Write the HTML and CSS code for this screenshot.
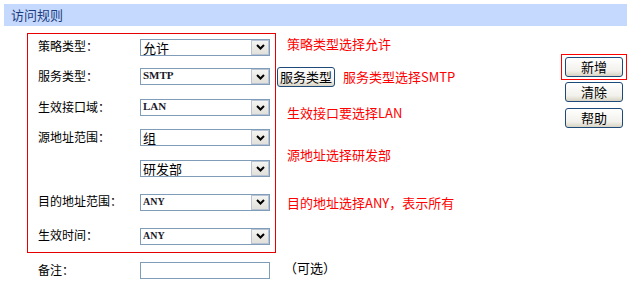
FILE: index.html
```html
<!DOCTYPE html>
<html lang="zh-CN">
<head>
  <meta charset="UTF-8">
  <title>访问规则</title>
  <link rel="stylesheet" href="styles.css">
</head>
<body>
  <div class="title-bar">访问规则</div>

  <div class="page">
    <div class="rule-form">
      <div class="box"></div>

      <div class="r1">
        <span class="lbl">策略类型：</span>
        <span class="sel"><span class="val">允许</span><span class="arrow"><svg width="9" height="6" viewBox="0 0 9 6"><path d="M1 1l3.5 3.5L8 1" fill="none" stroke="#000" stroke-width="2"/></svg></span></span>
        <span class="note note-up">策略类型选择允许</span>
      </div>

      <div class="r2">
        <span class="lbl">服务类型：</span>
        <span class="sel"><span class="val latin">SMTP</span><span class="arrow"><svg width="9" height="6" viewBox="0 0 9 6"><path d="M1 1l3.5 3.5L8 1" fill="none" stroke="#000" stroke-width="2"/></svg></span></span>
        <span class="note note-btn"><button class="xp-btn">服务类型</button><span>服务类型选择SMTP</span></span>
      </div>

      <div class="r3">
        <span class="lbl">生效接口域：</span>
        <span class="sel"><span class="val latin">LAN</span><span class="arrow"><svg width="9" height="6" viewBox="0 0 9 6"><path d="M1 1l3.5 3.5L8 1" fill="none" stroke="#000" stroke-width="2"/></svg></span></span>
        <span class="note note-down">生效接口要选择LAN</span>
      </div>

      <div class="r4">
        <span class="lbl">源地址范围：</span>
        <span class="sel"><span class="val">组</span><span class="arrow"><svg width="9" height="6" viewBox="0 0 9 6"><path d="M1 1l3.5 3.5L8 1" fill="none" stroke="#000" stroke-width="2"/></svg></span></span>
        <span class="note src-note">源地址选择研发部</span>
      </div>

      <div class="r5">
        <span class="sel"><span class="val">研发部</span><span class="arrow"><svg width="9" height="6" viewBox="0 0 9 6"><path d="M1 1l3.5 3.5L8 1" fill="none" stroke="#000" stroke-width="2"/></svg></span></span>
      </div>

      <div class="r6">
        <span class="lbl">目的地址范围：</span>
        <span class="sel"><span class="val latin small">ANY</span><span class="arrow"><svg width="9" height="6" viewBox="0 0 9 6"><path d="M1 1l3.5 3.5L8 1" fill="none" stroke="#000" stroke-width="2"/></svg></span></span>
        <span class="note">目的地址选择ANY，表示所有</span>
      </div>

      <div class="r7">
        <span class="lbl">生效时间：</span>
        <span class="sel"><span class="val latin small">ANY</span><span class="arrow"><svg width="9" height="6" viewBox="0 0 9 6"><path d="M1 1l3.5 3.5L8 1" fill="none" stroke="#000" stroke-width="2"/></svg></span></span>
      </div>

      <div class="r8">
        <span class="lbl">备注：</span>
        <input class="text-in" type="text">
        <span class="hint">（可选）</span>
      </div>
    </div>

    <div class="actions">
      <div class="marked"><button class="xp-btn">新增</button></div>
      <button class="xp-btn act">清除</button>
      <button class="xp-btn act">帮助</button>
    </div>
  </div>
</body>
</html>
```

FILE: styles.css
```css
body {
  margin: 4px;
  font-family: "Noto Sans CJK SC", "DejaVu Sans", sans-serif;
  font-size: 12px;
  color: #000;
  background: #fff;
}
.title-bar {
  height: 22px;
  line-height: 22px;
  padding-left: 7px;
  background: #c5d9ff;
  color: #1d3c7c;
  font-size: 13px;
}
.page {
  display: flex;
  margin-top: 7px;
}
.rule-form {
  display: grid;
  flex-shrink: 0;
  margin-left: 23px;
  grid-template-columns: 113px 130px 6px 285px;
  grid-template-rows: 28px 31px 31px 29px 33px 34px 34px 35px;
}
.rule-form > div:not(.box) {
  display: contents;
}
.box {
  grid-column: 1 / 4;
  grid-row: 1 / 8;
  border: 1px solid #e60000;
}
.r1 > * { grid-row: 1; }
.r2 > * { grid-row: 2; }
.r3 > * { grid-row: 3; }
.r4 > * { grid-row: 4; }
.r5 > * { grid-row: 5; }
.r6 > * { grid-row: 6; }
.r7 > * { grid-row: 7; }
.r8 > * { grid-row: 8; }
.r4 > .src-note { grid-row: 4 / 6; }

.lbl {
  grid-column: 1;
  align-self: center;
  padding-left: 11px;
  padding-bottom: 3px;
  white-space: nowrap;
}
.sel, .text-in {
  grid-column: 2;
  align-self: center;
  box-sizing: border-box;
  width: 130px;
  height: 17px;
  border: 1px solid #7f9db9;
  background: #fff;
}
.sel {
  display: flex;
  align-items: center;
  justify-content: space-between;
}
.val {
  padding-left: 2px;
  font-size: 13px;
  line-height: 15px;
}
.latin {
  font-family: "Liberation Serif", serif;
  font-weight: bold;
  font-size: 11px;
  color: #1a1a2a;
  padding-bottom: 2px;
}
.small {
  font-size: 10px;
}
.arrow {
  display: flex;
  align-items: center;
  justify-content: center;
  width: 18px;
  height: 15px;
  box-sizing: border-box;
  border: 1px solid #b8c4d6;
  background: linear-gradient(#f4f4f2, #e2e0da);
}
.text-in {
  margin: 0;
  padding: 0;
  font: inherit;
}
.note {
  grid-column: 4;
  align-self: center;
  padding-left: 11px;
  color: #ff0000;
  font-size: 13px;
  white-space: nowrap;
}
.note-up { padding-bottom: 8px; }
.note-down { padding-top: 9px; }
.note.note-btn {
  display: flex;
  align-items: center;
  gap: 8px;
  padding-left: 1px;
}
.hint {
  grid-column: 4;
  align-self: center;
  padding-left: 8px;
  padding-bottom: 6px;
  font-size: 13px;
}
.xp-btn {
  display: block;
  box-sizing: border-box;
  width: 58px;
  height: 20px;
  padding: 0;
  border: 1px solid #1e4a7a;
  border-radius: 3px;
  background: linear-gradient(#ffffff, #f2f1ec 70%, #d8d4c4);
  color: #000;
  font-family: "Noto Sans CJK SC", sans-serif;
  font-size: 13px;
  line-height: 18px;
}
.actions {
  display: flex;
  flex-direction: column;
  align-items: flex-start;
  flex-shrink: 0;
  margin-top: 21px;
}
.marked {
  width: 58px;
  padding: 2px 3px 2px 3px;
  border: 1px solid #ff0000;
}
.act {
  margin-left: 4px;
  margin-top: 2px;
}
.act + .act {
  margin-top: 6px;
}
```
